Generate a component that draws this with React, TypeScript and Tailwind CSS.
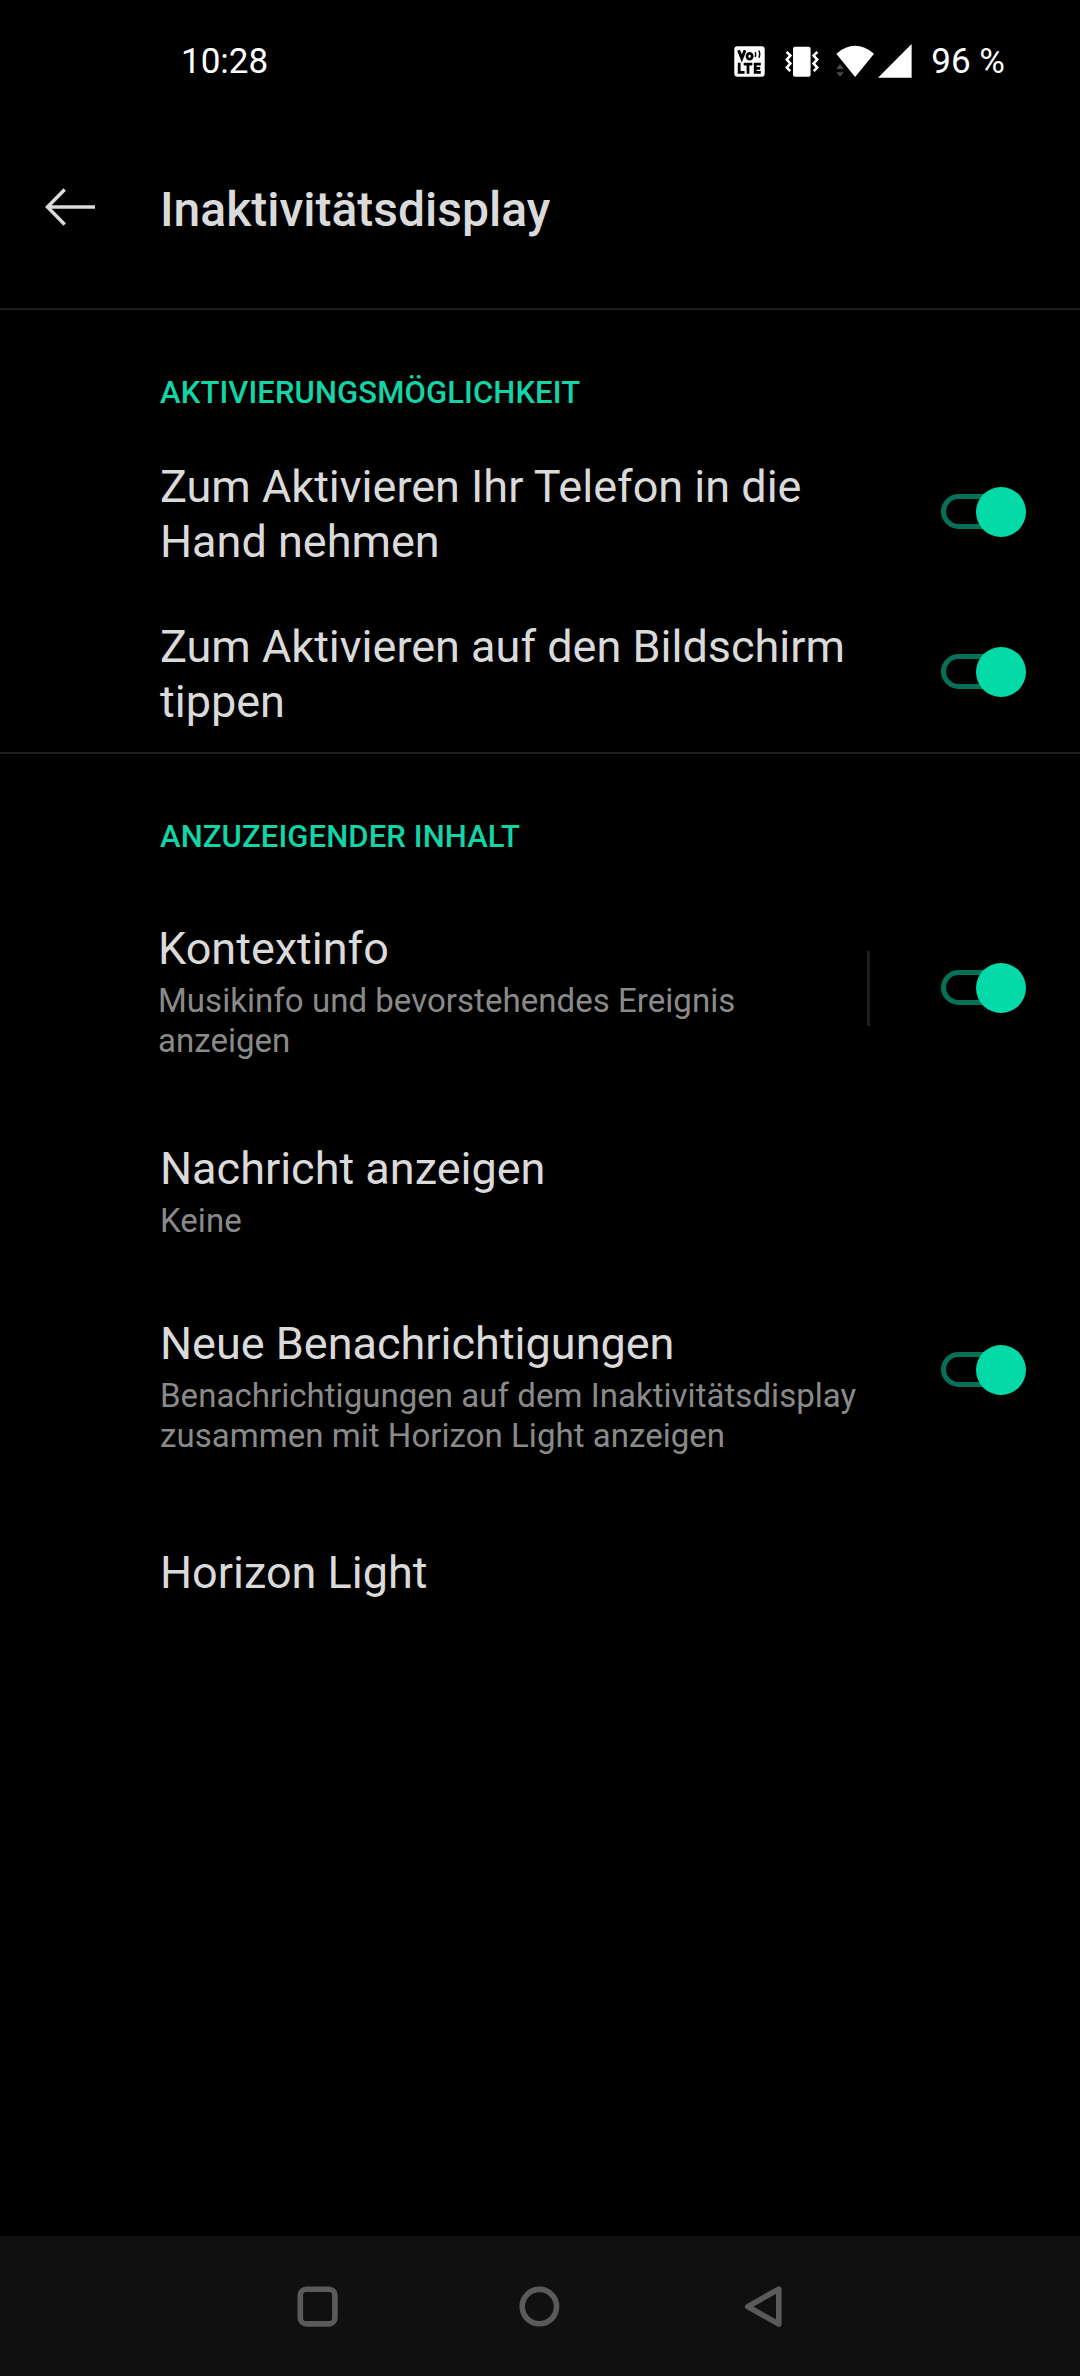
import React from "react";

function VolteIcon() {
  return (
    <svg width="31" height="31" viewBox="0 0 31 31" className="block">
      <rect x="0.3" y="0.3" width="30.4" height="30.4" rx="3" fill="#fff" />
      <g fill="none" stroke="#000" strokeWidth="2.8">
        <path d="M4.6 4.2 7.8 12.4 11 4.2" strokeWidth="3" />
        <ellipse cx="15.6" cy="10.2" rx="2.6" ry="2.9" strokeWidth="2.8" />
        <path d="M21.2 6.2q1 2 .1 4.8M25 4.5q1.4 3.1 .1 7.2" strokeWidth="1.5" />
        <path d="M5.2 16.8v9.5h5.4M9.7 18.2h8.6M14 18.2v9.5M26.8 18.2h-5.6v8.1h5.6M21 22.3h5.2" />
      </g>
    </svg>
  );
}

function VibrateIcon() {
  return (
    <svg width="34" height="31" viewBox="0 0 34 31" className="block">
      <rect x="8" y="0.8" width="17.6" height="30" rx="2" fill="#fff" />
      <g fill="none" stroke="#fff" strokeWidth="2.6">
        <path d="M1.6 5.8 5.4 9.6 1.8 13.6 5.4 17.6 1.8 21.6 5.2 25.2" />
        <path d="M32.4 5.8 28.6 9.6 32.2 13.6 28.6 17.6 32.2 21.6 28.8 25.2" />
      </g>
    </svg>
  );
}

function WifiIcon() {
  return (
    <svg width="39" height="33" viewBox="0 0 39 33" className="block">
      <path d="M0.3 8.7Q19.1-7 38 8.7L19.1 32Z" fill="#fff" />
      <path d="M.3 24 4 19 7.8 24ZM.3 27.3h7.5L4 31.8Z" fill="#4a4a4a" />
    </svg>
  );
}

function Toggle() {
  return (
    <div className="relative h-[50px] w-[85px] shrink-0">
      <div className="absolute left-0 top-[7px] h-[35px] w-[70px] rounded-full border-[5px] border-[#057158]" />
      <div className="absolute right-0 top-0 size-[50px] rounded-full bg-[#03daa8]" />
    </div>
  );
}

function Section({ children }: { children: React.ReactNode }) {
  return (
    <h2 className="pl-40 text-[31px] font-medium leading-[37px] tracking-[0.12px] text-[#12d4a7]">{children}</h2>
  );
}

function Label({ title, sub }: { title: React.ReactNode; sub?: React.ReactNode }) {
  return (
    <div className="grow whitespace-nowrap">
      <div className="text-[45px] leading-[55px] text-[#dadada]">{title}</div>
      {sub && <div className="mt-[5px] text-[33px] leading-[40px] tracking-[0.04px] text-[#8a8a8a]">{sub}</div>}
    </div>
  );
}

export default function App() {
  return (
    <div className="flex h-[2376px] w-[1080px] flex-col overflow-hidden bg-black font-['Roboto',sans-serif]">
      <div className="flex h-[122px] items-center pl-[181px] pt-px text-[35px] leading-[41px] text-white">
        <span>10:28</span>
        <div className="ml-auto flex items-center pr-[75px]">
          <VolteIcon />
          <div className="ml-[20px]"><VibrateIcon /></div>
          <div className="ml-[17px]"><WifiIcon /></div>
          <svg width="34" height="35" viewBox="0 0 34 35" className="ml-[3px] block">
            <path d="M0 33.8 33.6 0V33.8Z" fill="#fff" />
          </svg>
          <span className="ml-[19px]">96 %</span>
        </div>
      </div>

      <header className="flex h-[188px] items-start border-b-2 border-[#1f1f1f] pl-[45px] pt-[59px]">
        <svg width="50" height="40" viewBox="0 0 50 40" className="mt-[6px] block" fill="none" stroke="#dadada" strokeWidth="3.5">
          <path d="M2.5 20H50M19.7 2.5 2.5 20 19.7 37.5" />
        </svg>
        <h1 className="ml-[65px] text-[48px] font-medium leading-[57px] text-[#dadada]">Inaktivitätsdisplay</h1>
      </header>

      <main className="grow">
        <div className="h-[122px] pt-[64px]">
          <Section>AKTIVIERUNGSMÖGLICHKEIT</Section>
        </div>
        <div className="flex h-40 items-center pl-40 pr-[54px]">
          <div className="grow pt-1">
            <Label title={<>Zum Aktivieren Ihr Telefon in die<br />Hand nehmen</>} />
          </div>
          <Toggle />
        </div>
        <div className="flex h-40 items-center pl-40 pr-[54px]">
          <div className="grow pt-1">
            <Label title={<>Zum Aktivieren auf den Bildschirm<br />tippen</>} />
          </div>
          <Toggle />
        </div>

        <div className="h-[169px] border-t-2 border-[#1f1f1f] pt-[64px]">
          <Section>ANZUZEIGENDER INHALT</Section>
        </div>
        <div className="flex h-[220px] items-start pl-[158px] pr-[54px]">
          <Label title="Kontextinfo" sub={<>Musikinfo und bevorstehendes Ereignis<br />anzeigen</>} />
          <div className="mr-[71px] mt-[30px] h-[75px] w-[3px] bg-[#1f1f1f]" />
          <div className="mt-[42px]"><Toggle /></div>
        </div>
        <div className="h-[175px] pl-40">
          <Label title="Nachricht anzeigen" sub="Keine" />
        </div>
        <div className="flex h-[229px] items-start pl-40 pr-[54px]">
          <Label title="Neue Benachrichtigungen" sub={<>Benachrichtigungen auf dem Inaktivitätsdisplay<br />zusammen mit Horizon Light anzeigen</>} />
          <div className="mt-[29px]"><Toggle /></div>
        </div>
        <div className="pl-40">
          <Label title="Horizon Light" />
        </div>
      </main>

      <nav className="flex h-[140px] shrink-0 items-center justify-center bg-[#101010] pt-[2px]">
        <svg width="44" height="44" viewBox="0 0 44 44" fill="none" stroke="#5a5a5a" strokeWidth="5.6" className="block">
          <rect x="4.3" y="4.3" width="34.6" height="34.6" rx="6" />
        </svg>
        <svg width="44" height="44" viewBox="0 0 44 44" fill="none" stroke="#5a5a5a" strokeWidth="5.6" className="ml-[178px] block">
          <circle cx="21.4" cy="21.6" r="17.2" />
        </svg>
        <svg width="44" height="44" viewBox="0 0 44 44" fill="none" stroke="#5a5a5a" strokeWidth="5.6" strokeLinejoin="round" className="ml-[178px] block">
          <path d="M38.8 4.1V39.1L7.8 21.6Z" />
        </svg>
      </nav>
    </div>
  );
}
